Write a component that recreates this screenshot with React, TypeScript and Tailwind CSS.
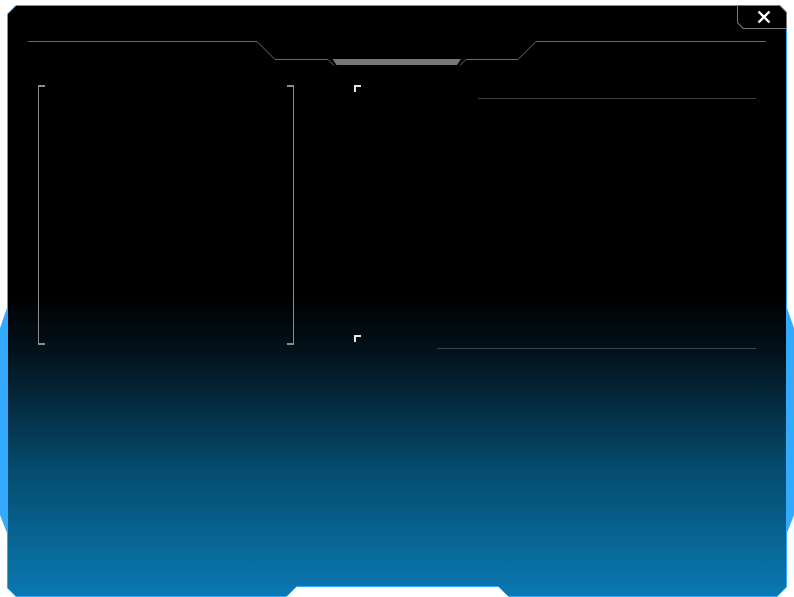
import React from "react";

function Bracket({ side }: { side: "left" | "right" }) {
  const align = side === "left" ? "items-start" : "items-end";
  const line = side === "left" ? "border-l" : "border-r";
  return (
    <div className={`flex h-full w-[7px] flex-col ${align}`}>
      <div className="h-[2px] w-[7px] bg-[#8c8c8c]" />
      <div className={`w-[7px] flex-1 ${line} border-[#8c8c8c]`} />
      <div className="h-[2px] w-[7px] bg-[#8c8c8c]" />
    </div>
  );
}

function CornerMark() {
  return <div className="h-[7px] w-[7px] border-l-2 border-t-2 border-[#e6e6e6]" />;
}

export default function App() {
  return (
    <div className="relative h-[597px] w-[794px] overflow-hidden bg-white font-['Liberation_Sans',sans-serif]">
      {/* blue outline with side wings */}
      <div className="absolute inset-0 bg-[#33aaff] [clip-path:polygon(7px_14px,16px_5px,778px_5px,787px_14px,787px_308px,794px_328px,794px_515px,787px_533px,787px_587px,777px_597px,509px_597px,499px_587px,296px_587px,286px_597px,16px_597px,7px_588px,7px_533px,0px_515px,0px_328px,7px_308px)]" />

      {/* window interior */}
      <div className="absolute left-[8px] top-[6px] flex h-[590px] w-[778px] flex-col bg-[linear-gradient(to_bottom,#000_0%,#000_49%,#02131c_59%,#054a6c_78%,#0a79b2_100%)] [clip-path:polygon(0px_8px,8px_0px,770px_0px,778px_8px,778px_581px,769px_590px,500px_590px,490px_580px,289px_580px,279px_590px,8px_590px,0px_582px)]">
        <svg className="h-[66px] w-[778px] shrink-0" viewBox="8 6 778 66">
          <path
            d="M28 41.5 H257 L275 59.5 H328 L334 65.5 M466 59.5 L460 65.5 M466 59.5 H518 L536 41.5 H766"
            fill="none"
            stroke="#6b6b6b"
            strokeWidth="1"
          />
          <polygon points="332.5,59 461,59 457,65 336.5,65" fill="#777777" />
        </svg>

        <div className="mt-[13px] flex items-start pl-[30px]">
          <div className="flex h-[260px] w-[256px] justify-between">
            <Bracket side="left" />
            <Bracket side="right" />
          </div>
          <div className="ml-[60px] flex h-[257px] w-[83px] flex-col justify-between">
            <CornerMark />
            <CornerMark />
          </div>
          <div className="flex h-[264px] w-[319px] flex-col">
            <div className="ml-[41px] mt-[13px] h-px bg-[#3d3d3d]" />
            <div className="flex-1" />
            <div className="h-px bg-[#36444d]" />
          </div>
        </div>
      </div>

      {/* close button */}
      <div className="absolute left-[737px] top-[5px] h-[24px] w-[50px] bg-[#7a7a7a] [clip-path:polygon(0px_0px,43px_0px,50px_7px,50px_24px,6px_24px,0px_18px)]">
        <div className="absolute inset-0 flex items-center justify-center bg-black [clip-path:polygon(1px_1px,42.6px_1px,49px_7.4px,49px_23px,6.4px_23px,1px_17.6px)]">
          <svg width="14" height="14" viewBox="0 0 14 14" className="ml-[3px]">
            <path d="M1.5 1.5 L12.5 12.5 M12.5 1.5 L1.5 12.5" stroke="#ffffff" strokeWidth="2.4" strokeLinecap="butt" />
          </svg>
        </div>
      </div>
    </div>
  );
}
